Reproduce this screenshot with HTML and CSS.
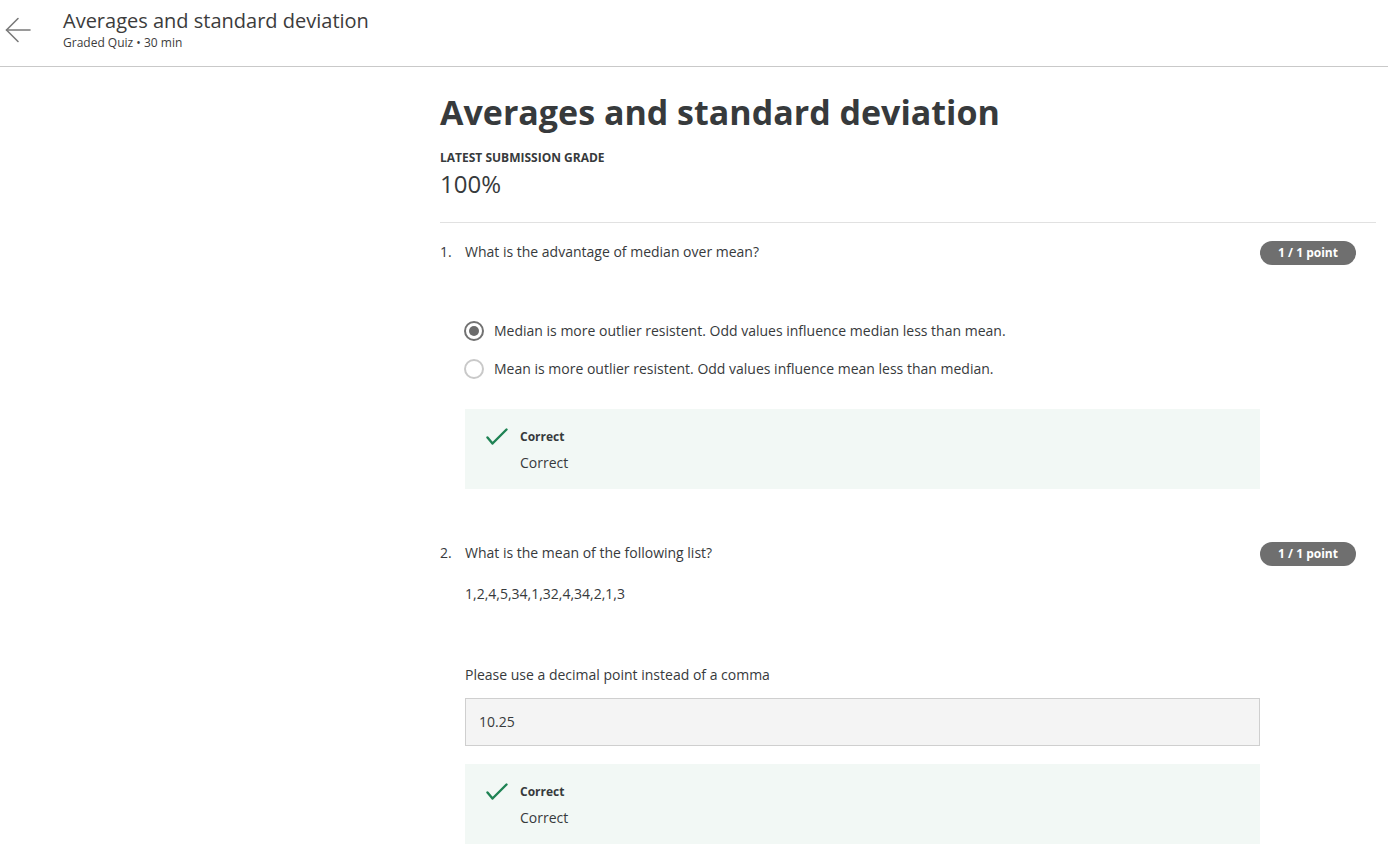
FILE: index.html
```html
<!DOCTYPE html>
<html lang="en">
<head>
<meta charset="utf-8">
<title>Averages and standard deviation</title>
<link rel="stylesheet" href="styles.css">
</head>
<body>
<header class="topbar">
  <button class="back" aria-label="Back">
    <svg width="26" height="26" viewBox="0 0 26 26" fill="none" stroke="#7a7a7a" stroke-width="1.6" stroke-linecap="round" stroke-linejoin="round">
      <path d="M25 13H1.5"/>
      <path d="M13 1.5L1.5 13L13 24.5"/>
    </svg>
  </button>
  <div class="topbar-titles">
    <div class="topbar-title">Averages and standard deviation</div>
    <div class="topbar-sub">Graded Quiz • 30 min</div>
  </div>
</header>

<main class="page">
  <h1 class="quiz-title">Averages and standard deviation</h1>
  <div class="grade-label">LATEST SUBMISSION GRADE</div>
  <div class="grade-value">100%</div>
  <hr class="divider">

  <section class="question">
    <div class="q-num">1.</div>
    <div class="q-body">
      <div class="q-text">What is the advantage of median over mean?</div>
      <div class="options">
        <div class="option">
          <span class="radio checked"></span>
          <span>Median is more outlier resistent. Odd values influence median less than mean.</span>
        </div>
        <div class="option">
          <span class="radio"></span>
          <span>Mean is more outlier resistent. Odd values influence mean less than median.</span>
        </div>
      </div>
      <div class="feedback">
        <svg class="check" width="22" height="18" viewBox="0 0 22 18" fill="none" stroke="#1f8354" stroke-width="2.4" stroke-linecap="round" stroke-linejoin="round">
          <path d="M1.5 9.5L6.5 15.5L20.5 1.5"/>
        </svg>
        <div class="fb-text">
          <div class="fb-title">Correct</div>
          <div class="fb-msg">Correct</div>
        </div>
      </div>
    </div>
    <div class="badge">1 / 1 point</div>
  </section>

  <section class="question">
    <div class="q-num">2.</div>
    <div class="q-body">
      <div class="q-text">What is the mean of the following list?</div>
      <div class="q-list">1,2,4,5,34,1,32,4,34,2,1,3</div>
      <div class="q-hint">Please use a decimal point instead of a comma</div>
      <div class="answer-box">10.25</div>
      <div class="feedback">
        <svg class="check" width="22" height="18" viewBox="0 0 22 18" fill="none" stroke="#1f8354" stroke-width="2.4" stroke-linecap="round" stroke-linejoin="round">
          <path d="M1.5 9.5L6.5 15.5L20.5 1.5"/>
        </svg>
        <div class="fb-text">
          <div class="fb-title">Correct</div>
          <div class="fb-msg">Correct</div>
        </div>
      </div>
    </div>
    <div class="badge">1 / 1 point</div>
  </section>
</main>
</body>
</html>
```

FILE: styles.css
```css
* { box-sizing: border-box; }

body {
  margin: 0;
  font-family: "Open Sans", "Noto Sans", Arial, sans-serif;
  color: #373a3c;
  background: #fff;
}

.topbar {
  display: flex;
  align-items: flex-start;
  height: 67px;
  border-bottom: 1px solid #c9c9c9;
}

.back {
  width: 63px;
  height: 60px;
  padding: 17px 0 0 5px;
  border: 0;
  background: none;
  display: flex;
  align-items: flex-start;
  justify-content: flex-start;
}

.topbar-titles {
  padding-top: 9px;
}

.topbar-title {
  font-size: 20px;
  line-height: 24px;
  color: #3c3c3c;
}

.topbar-sub {
  margin-top: 2px;
  font-size: 12px;
  line-height: 16px;
  color: #3c3c3c;
}

.page {
  padding: 0 12px 40px 440px;
}

.quiz-title {
  margin: 23px 0 0;
  font-size: 34px;
  line-height: 45px;
  font-weight: 700;
  color: #373a3c;
}

.grade-label {
  margin-top: 15px;
  font-size: 12px;
  line-height: 16px;
  font-weight: 700;
  color: #373a3c;
}

.grade-value {
  margin-top: 2px;
  font-size: 24px;
  line-height: 32px;
  color: #373a3c;
}

.divider {
  margin: 22px 0 0;
  border: 0;
  border-top: 1px solid #e1e1e1;
}

.question {
  display: grid;
  grid-template-columns: 25px 795px 96px;
  margin-top: 19px;
  font-size: 14px;
  line-height: 20px;
}

.question + .question {
  margin-top: 54px;
}

.q-num {
  color: #373a3c;
}

.q-text {
  color: #373a3c;
}

.badge {
  justify-self: end;
  width: 96px;
  height: 24px;
  margin-top: -1px;
  border-radius: 12px;
  background: #6f6f6f;
  color: #fff;
  font-size: 12px;
  line-height: 24px;
  font-weight: 700;
  text-align: center;
}

.options {
  margin-top: 50px;
}

.option {
  display: flex;
  align-items: center;
  gap: 10px;
  padding: 9px 0;
  color: #373a3c;
}

.radio {
  flex: none;
  width: 20px;
  height: 20px;
  margin-left: -1px;
  border-radius: 50%;
  border: 2px solid #c9c9c9;
  display: flex;
  align-items: center;
  justify-content: center;
}

.radio.checked {
  border-color: #727272;
}

.radio.checked::after {
  content: "";
  width: 10px;
  height: 10px;
  border-radius: 50%;
  background: #6b6b6b;
}

.feedback {
  display: flex;
  align-items: flex-start;
  gap: 12px;
  margin-top: 21px;
  padding: 19px 20px 16px 21px;
  background: #f2f8f5;
}

.check {
  flex: none;
  margin-top: 0;
}

.fb-title {
  font-size: 12px;
  line-height: 18px;
  font-weight: 700;
  color: #373a3c;
}

.fb-msg {
  margin-top: 7px;
  font-size: 14px;
  line-height: 20px;
  color: #373a3c;
}

.q-list {
  margin-top: 21px;
}

.q-hint {
  margin-top: 61px;
}

.answer-box {
  margin-top: 13px;
  height: 48px;
  padding: 0 13px;
  line-height: 46px;
  background: #f4f4f4;
  border: 1px solid #cfcfcf;
  color: #373a3c;
}

.question .answer-box + .feedback {
  margin-top: 18px;
}
```
